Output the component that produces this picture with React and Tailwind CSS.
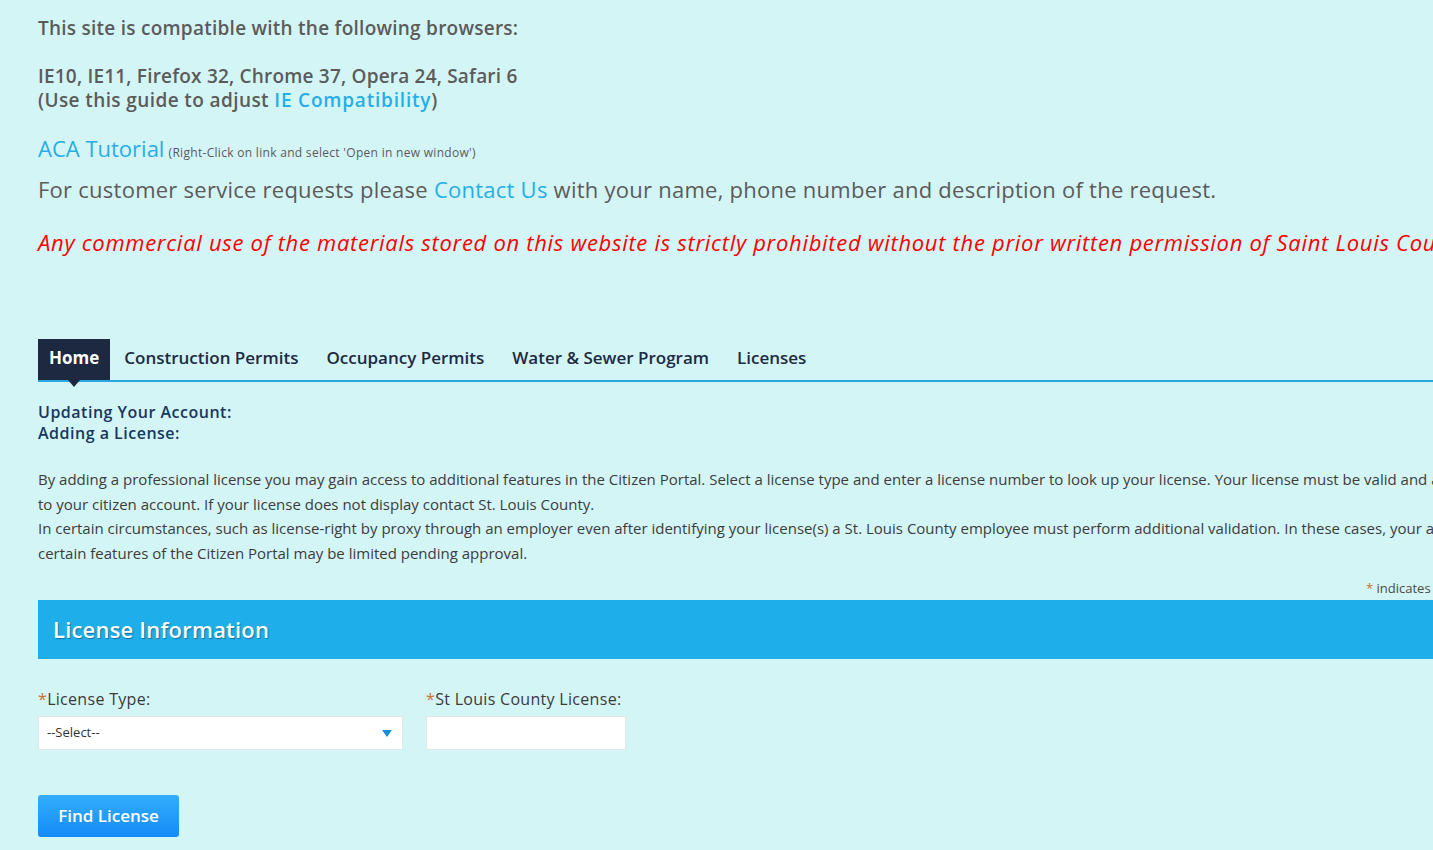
import React from 'react';

const tabs = ['Home', 'Construction Permits', 'Occupancy Permits', 'Water & Sewer Program', 'Licenses'];

const App = () => {
  return (
    <div className="w-[1433px] h-[850px] overflow-hidden bg-[#d4f5f6] font-['Open_Sans',sans-serif]">
      <div className="w-[1800px] pl-[38px] pt-[16px]">
        {/* Browser notice */}
        <p className="text-[19px] leading-[24px] font-semibold tracking-[0.25px] text-[#5b5b5b]">
          This site is compatible with the following browsers:
        </p>
        <p className="mt-[24px] text-[19px] leading-[24px] font-semibold tracking-[0.2px] text-[#5b5b5b]">
          IE10, IE11, Firefox 32, Chrome 37, Opera 24, Safari 6
          <br />
          <span className="tracking-[0.4px]">(Use this guide to adjust </span>
          <a className="text-[#26aee6] tracking-[0.8px]">IE Compatibility</a>)
        </p>
        <p className="mt-[22px] leading-[28px] text-[#5b5b5b]">
          <a className="text-[22px] text-[#26aee6]">ACA Tutorial</a>{' '}
          <span className="text-[12px] tracking-[0.3px]">(Right-Click on link and select 'Open in new window')</span>
        </p>
        <p className="mt-[8px] text-[22px] leading-[28px] tracking-[0.25px] text-[#5b5b5b] whitespace-nowrap">
          For customer service requests please <a className="text-[#26aee6]">Contact Us</a> with your name, phone number and description of the request.
        </p>
        <p className="mt-[25px] text-[22px] leading-[28px] italic tracking-[0.7px] text-[#ff0000] whitespace-nowrap">
          Any commercial use of the materials stored on this website is strictly prohibited without the prior written permission of Saint Louis County.
        </p>

        {/* Tabs */}
        <div className="mt-[83px] border-b-2 border-[#2aa7e0] flex items-end">
          {tabs.map((t, i) => (
            <div
              key={t}
              className={
                i === 0
                  ? 'relative h-[41px] pb-[3px] px-[11px] flex items-center bg-[#1c2940] text-white text-[17px] font-bold'
                  : 'h-[41px] pb-[3px] px-[14px] flex items-center text-[#1c2a44] text-[17px] font-semibold'
              }
            >
              {t}
              {i === 0 && (
                <span className="absolute left-1/2 -translate-x-1/2 top-full w-0 h-0 border-l-[6px] border-r-[6px] border-t-[7px] border-l-transparent border-r-transparent border-t-[#1c2940]" />
              )}
            </div>
          ))}
        </div>

        <div className="mt-[20px] text-[16px] leading-[21px] font-semibold tracking-[0.5px] text-[#17375e]">
          <p>Updating Your Account:</p>
          <p>Adding a License:</p>
        </div>

        <p className="mt-[23px] text-[15px] leading-[24.5px] text-[#3c3c3c] whitespace-nowrap">
          By adding a professional license you may gain access to additional features in the Citizen Portal. Select a license type and enter a license number to look up your license. Your license must be valid and active in order to link it
          <br />
          to your citizen account. If your license does not display contact St. Louis County.
          <br />
          In certain circumstances, such as license-right by proxy through an employer even after identifying your license(s) a St. Louis County employee must perform additional validation. In these cases, your access to
          <br />
          certain features of the Citizen Portal may be limited pending approval.
        </p>

        <div className="mt-[13px] ml-[1328px] whitespace-nowrap text-[13px] leading-[20px] text-[#4a4a4a]">
          <span className="text-[#c8742c]">*</span> indicates a required field
        </div>

        {/* License Information */}
        <div className="mt-[2px] h-[59px] bg-[#1eaee9] flex items-center pl-[15px]">
          <h2 className="text-[22px] font-semibold tracking-[0.2px] text-white [text-shadow:1px_1px_1px_rgba(0,0,0,0.35)]">
            License Information
          </h2>
        </div>

        <div className="mt-[28px] flex gap-[23px]">
          <div>
            <label className="block text-[16px] leading-[24px] tracking-[0.3px] text-[#3a3a3a]">
              <span className="text-[#c8742c]">*</span>License Type:
            </label>
            <div className="mt-[5px] w-[365px] h-[34px] bg-white border border-[#e2e8ea] flex items-center justify-between px-[8px]">
              <span className="text-[13px] text-[#333]">--Select--</span>
              <span className="w-0 h-0 border-l-[5px] border-r-[5px] border-t-[7px] border-l-transparent border-r-transparent border-t-[#1a8fd0] mr-[2px]" />
            </div>
          </div>
          <div>
            <label className="block text-[16px] leading-[24px] tracking-[0.3px] text-[#3a3a3a]">
              <span className="text-[#c8742c]">*</span>St Louis County License:
            </label>
            <div className="mt-[5px] w-[200px] h-[34px] bg-white border border-[#e2e8ea]" />
          </div>
        </div>

        <button className="mt-[45px] w-[141px] h-[42px] rounded-[3px] bg-gradient-to-b from-[#33adfb] to-[#138bf8] text-white text-[17px] font-semibold">
          Find License
        </button>
      </div>
    </div>
  );
};

export default App;
